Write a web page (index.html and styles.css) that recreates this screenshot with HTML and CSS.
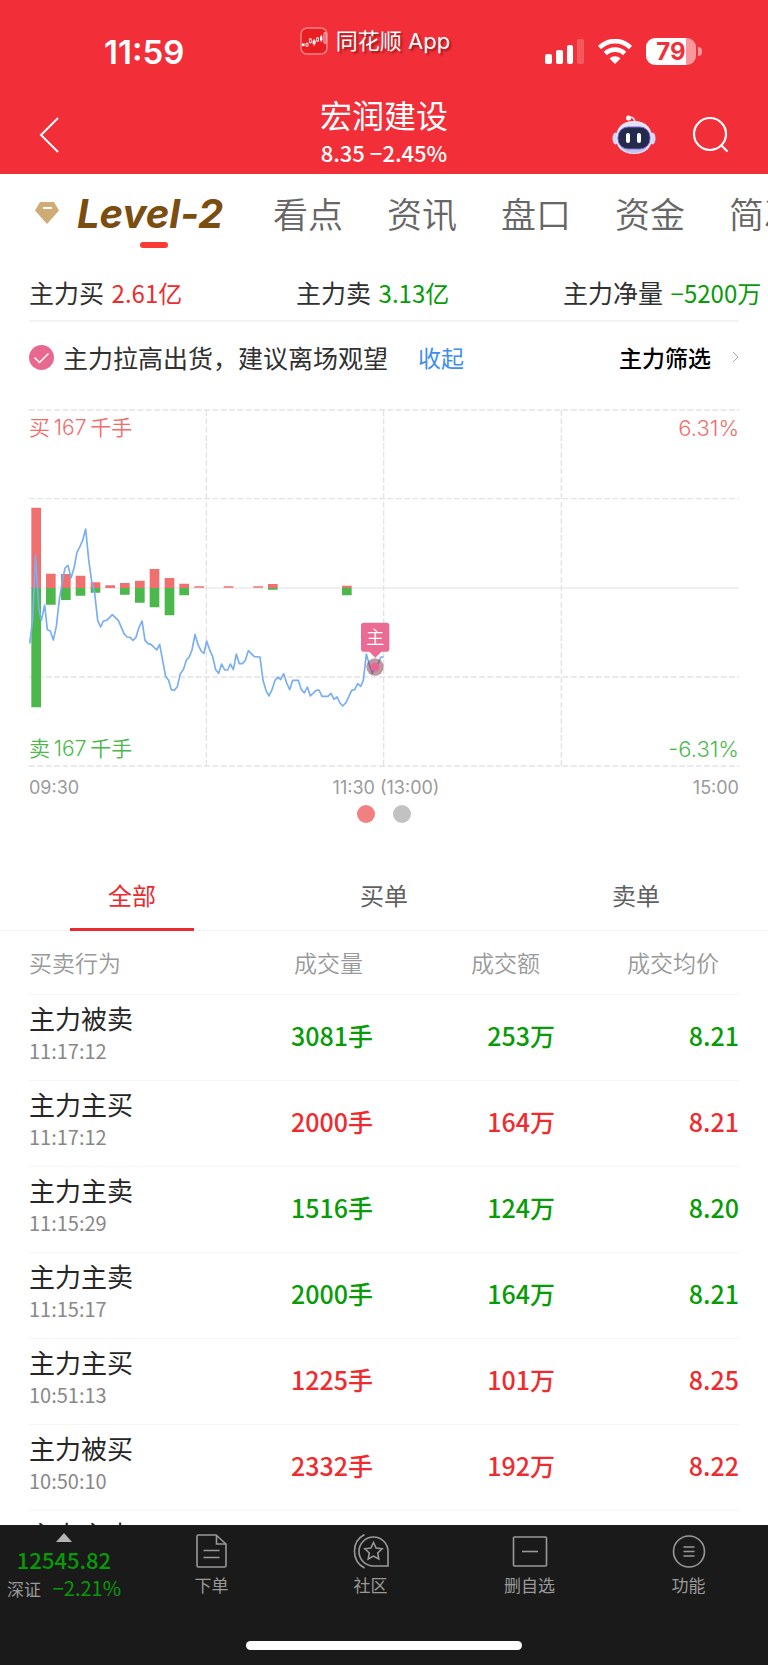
FILE: index.html
```html
<!DOCTYPE html>
<html lang="zh-CN">
<head>
	<meta charset="utf-8">
	<meta name="viewport" content="width=device-width, initial-scale=1">
	<title>宏润建设</title>
	<link rel="stylesheet" href="styles.css">
</head>
<body>
	<header class="header">
		<div class="status">
			<div class="clock">11:59</div>
			<div class="brand">
				<svg width="28" height="28" viewBox="0 0 28 28">
					<rect x="1" y="1" width="26" height="26" rx="6" fill="#e81e22" stroke="#f9858a" stroke-width="1.5"/>
					<g fill="#fff">
						<rect x="2" y="16.500" width="2.600" height="2.600"/>
						<rect x="12.600" y="13.500" width="3" height="3.600"/>
						<rect x="20" y="9.500" width="2.400" height="4"/>
					</g>
					<g fill="none" stroke="#fff" stroke-width=".8">
						<path d="M14.100 12v7M21.200 8v7M7 15.500v1M7 19v1M10.300 11v1M10.300 15.500v1M17.600 10v1M17.600 14v1"/>
						<rect x="6" y="16.500" width="2" height="2.500"/>
						<rect x="9.300" y="12" width="2" height="3.500"/>
						<rect x="16.600" y="11" width="2" height="3"/>
						<rect x="24" y="5.500" width="2" height="11" rx="1"/>
					</g>
				</svg>
				<span>同花顺 App</span>
			</div>
			<div class="signals">
				<svg width="39" height="25" viewBox="0 0 39 25" fill="#fff">
					<rect x="0" y="15" width="7" height="10" rx="2"/>
					<rect x="11" y="11" width="7" height="14" rx="2"/>
					<rect x="22" y="6" width="6" height="19" rx="2"/>
					<rect x="32" y="0" width="7" height="25" rx="2" opacity=".2"/>
				</svg>
				<svg width="34" height="25" viewBox="0 0 34 25" fill="none" stroke="#fff" stroke-width="4.600">
					<path d="M1.500 8.500a22 22 0 0 1 31 0"/>
					<path d="M7.300 14.500a14 14 0 0 1 19.400 0"/>
					<path d="M17 25l-5.500-5.500a8 8 0 0 1 11 0z" fill="#fff" stroke="none"/>
				</svg>
				<div class="battery">79</div>
			</div>
		</div>
		<div class="titlebar">
			<button class="icon-btn" aria-label="返回">
				<svg width="20" height="36" viewBox="0 0 20 36" fill="none" stroke="#fff" stroke-width="2"><path d="M19 1L2 18l17 17"/></svg>
			</button>
			<div class="title">
				<h1>宏润建设</h1>
				<p>8.35 −2.45%</p>
			</div>
			<div class="tools">
				<button class="icon-btn" aria-label="助手">
					<svg width="44" height="40" viewBox="0 0 44 40">
						<path d="M16 2.500c5-1 7 1 7 6" fill="none" stroke="#e9e9fa" stroke-width="1.500"/>
						<circle cx="16.500" cy="3" r="2.500" fill="#fff"/>
						<ellipse cx="3.500" cy="23.500" rx="3" ry="6" fill="#d5d6f3"/>
						<ellipse cx="40.500" cy="23.500" rx="3" ry="6" fill="#d5d6f3"/>
						<path d="M22 6c13 0 18 8 18 17s-6 16-18 16S4 32 4 23 9 6 22 6z" fill="#e4e4f6"/>
						<path d="M8 31c3 5 8 7 14 7s11-2 14-7c-4 3-8 4-14 4s-10-1-14-4z" fill="#c3c5e8"/>
						<rect x="6" y="12" width="32" height="22" rx="10" fill="#242a4c" stroke="#7d62d8"/>
						<rect x="14" y="18" width="4" height="10" rx="2" fill="#fff"/>
						<rect x="25" y="18" width="4" height="10" rx="2" fill="#fff"/>
					</svg>
				</button>
				<button class="icon-btn" aria-label="搜索">
					<svg width="37" height="37" viewBox="0 0 37 37" fill="none" stroke="#fff" stroke-width="2.200"><circle cx="18" cy="18" r="16"/><path d="M29 29l6.500 6.500"/></svg>
				</button>
			</div>
		</div>
	</header>

	<main>
		<nav class="tabs">
			<a href="#" class="level2">
				<svg width="24" height="22" viewBox="0 0 24 22"><path d="M5 0h14l5 8.500L12 22 0 8.500z" fill="#cfac76"/><rect x="8" y="5" width="9" height="2" fill="#fff"/></svg>
				<b>Level-2</b>
			</a>
			<a href="#">看点</a>
			<a href="#">资讯</a>
			<a href="#">盘口</a>
			<a href="#">资金</a>
			<a href="#">简况</a>
		</nav>

		<div class="summary">
			<div>主力买 <span class="up">2.61亿</span></div>
			<div>主力卖 <span class="down">3.13亿</span></div>
			<div>主力净量 <span class="down">−5200万</span></div>
		</div>

		<div class="advice">
			<svg width="25" height="25" viewBox="0 0 25 25" fill="none"><circle cx="12.500" cy="12.500" r="12.500" fill="#e8688f"/><path d="M5.500 12.500l5 5 9-9" stroke="#fff" stroke-width="1.500"/></svg>
			<span>主力拉高出货，建议离场观望</span>
			<button class="collapse">收起</button>
			<button class="filter">主力筛选
				<svg width="7" height="12" viewBox="0 0 7 12" fill="none" stroke="#aaa"><path d="M1 1l5 5-5 5"/></svg>
			</button>
		</div>

		<section class="chart">
			<svg class="plot" viewBox="87 28 2130 1074" fill="none">
				<g stroke="#e3e3e5" stroke-width="4" stroke-dasharray="18 7">
					<path d="M87 31H2217M87 297H2217M87 832H2217M87 1099H2217"/>
					<path d="M619 31V1099M1151 31V1099M1684 31V1099"/>
				</g>
				<path d="M87 565H2217" stroke="#e0e0e0" stroke-width="3"/>
				<path fill="#f07070" d="M94 324h29v241h-29zM138 522h29v43h-29zM183 523h29v42h-29zM227 528h29v37h-29zM272 548h29v17h-29zM316 557h29v8h-29zM360 550h29v15h-29zM405 543h29v22h-29zM449 508h29v57h-29zM494 535h29v30h-29zM538 552h29v13h-29zM583 560h29v4h-29zM671 560h29v4h-29zM760 560h29v4h-29zM804 553h29v12h-29zM1026 558h29v7h-29z"/>
				<path fill="#4bb84b" d="M94 565h29v358h-29zM138 565h29v50h-29zM183 565h29v36h-29zM227 565h29v23h-29zM272 565h29v14h-29zM360 565h29v20h-29zM405 565h29v44h-29zM449 565h29v58h-29zM494 565h29v82h-29zM538 565h29v22h-29zM804 565h29v5h-29zM1026 565h29v22h-29z"/>
				<polyline stroke="#78aef2" stroke-width="5" stroke-linejoin="round" points="89,732 98,660 107,467 116,625 124,662 134,616 142,690 151,694 160,721 169,680 178,600 187,545 195,505 204,497 213,535 222,505 231,458 240,440 248,422 257,388 266,480 275,545 284,580 293,662 302,682 310,664 320,662 337,645 355,662 372,702 381,712 390,713 399,722 408,713 417,683 426,664 435,722 444,732 453,734 470,751 479,734 497,831 506,842 514,870 523,872 532,861 541,822 550,810 559,782 568,771 576,751 585,704 594,735 604,755 612,761 620,724 630,753 638,771 647,810 656,821 665,793 674,811 683,811 691,793 700,810 709,763 718,792 727,792 736,782 745,753 763,771 780,772 789,842 798,872 807,889 816,870 825,842 834,832 842,840 851,822 860,850 869,870 878,842 895,842 904,870 913,880 922,862 931,889 948,872 957,871 966,890 984,890 993,881 1002,899 1011,892 1020,910 1028,919 1038,909 1055,872 1064,870 1073,852 1082,860 1090,842 1099,763 1108,795 1117,821 1126,800 1135,790 1143,772 1151,772"/>
				<circle cx="1125" cy="802" r="26" fill="#7b2f45" fill-opacity=".5"/>
				<circle cx="1125" cy="802" r="13" fill="#ea6690"/>
				<path d="M1091 669h69q8 0 8 8v71q0 8-8 8h-16l-18 18-18-18h-17q-8 0-8-8v-71q0-8 8-8z" fill="#ea6c94"/>
				<text class="flag" x="1126" y="733" text-anchor="middle">主</text>
			</svg>
			<span class="label buy">买&thinsp;167&thinsp;千手</span>
			<span class="label buy right">6.31%</span>
			<span class="label sell">卖&thinsp;167&thinsp;千手</span>
			<span class="label sell right">-6.31%</span>
		</section>
		<div class="axis"><span>09:30</span><span>11:30 (13:00)</span><span>15:00</span></div>
		<div class="dots"><i class="on"></i><i></i></div>

		<nav class="orders">
			<a href="#" class="on">全部</a>
			<a href="#">买单</a>
			<a href="#">卖单</a>
		</nav>

		<div class="trades">
			<table>
				<thead>
					<tr><th>买卖行为</th><th class="volume">成交量</th><th class="amount">成交额</th><th class="price">成交均价</th></tr>
				</thead>
				<tbody>
					<tr class="down"><td>主力被卖<time>11:17:12</time></td><td>3081手</td><td>253万</td><td>8.21</td></tr>
					<tr class="up"><td>主力主买<time>11:17:12</time></td><td>2000手</td><td>164万</td><td>8.21</td></tr>
					<tr class="down"><td>主力主卖<time>11:15:29</time></td><td>1516手</td><td>124万</td><td>8.20</td></tr>
					<tr class="down"><td>主力主卖<time>11:15:17</time></td><td>2000手</td><td>164万</td><td>8.21</td></tr>
					<tr class="up"><td>主力主买<time>10:51:13</time></td><td>1225手</td><td>101万</td><td>8.25</td></tr>
					<tr class="up"><td>主力被买<time>10:50:10</time></td><td>2332手</td><td>192万</td><td>8.22</td></tr>
					<tr class="down"><td>主力主卖</td><td></td><td></td><td></td></tr>
				</tbody>
			</table>
		</div>
	</main>

	<footer class="footer">
		<div class="menu">
			<a href="#" class="index">
				<svg width="16" height="9" viewBox="0 0 16 9"><path d="M8 0l8 9H0z" fill="#b5b5b5"/></svg>
				<strong>12545.82</strong>
				<span>深证 <em>−2.21%</em></span>
			</a>
			<a href="#">
				<svg width="36" height="36" viewBox="0 0 36 36" fill="none" stroke="#999" stroke-width="1.600"><path d="M22 2H4.500Q3 2 3 3.500v29Q3 34 4.500 34h26q1.500 0 1.500-1.500V11z"/><path d="M22.500 2.500V11H32M9.500 17.500h16M9.500 24.500h16"/></svg>
				下单
			</a>
			<a href="#">
				<svg width="36" height="36" viewBox="0 0 36 36" fill="none" stroke="#999" stroke-width="1.600"><path d="M11.500 1.500a19 19 0 0 0 0 33.500M20.500 4a14.500 14.500 0 1 0 0 29H35V18.500A14.500 14.500 0 0 0 20.500 4z"/><path d="M20.500 9.500l2.600 5.500 6 .8-4.400 4.200 1.100 6-5.300-2.900-5.300 2.900 1.100-6-4.400-4.200 6-.8z"/></svg>
				社区
			</a>
			<a href="#">
				<svg width="36" height="36" viewBox="0 0 36 36" fill="none" stroke="#999" stroke-width="1.600"><rect x="1.500" y="4" width="33" height="29" rx="1"/><path d="M10 18.500h16"/></svg>
				删自选
			</a>
			<a href="#">
				<svg width="36" height="36" viewBox="0 0 36 36" fill="none" stroke="#999" stroke-width="1.600"><circle cx="18" cy="18.500" r="15.500"/><path d="M12.500 14h11M12.500 18.500h11M12.500 23h11"/></svg>
				功能
			</a>
		</div>
		<div class="home"></div>
	</footer>
</body>
</html>
```

FILE: styles.css
```css
* {
	box-sizing: border-box;
}
body {
	margin: 0;
	height: 100vh;
	display: flex;
	flex-direction: column;
	overflow: hidden;
	background: #fff;
	color: #303030;
	font-family: "Noto Sans CJK SC", sans-serif;
	font-weight: 400;
}
a {
	color: inherit;
	text-decoration: none;
}
button {
	border: 0;
	padding: 0;
	background: none;
	color: inherit;
	font: inherit;
	cursor: pointer;
}
svg {
	display: block;
	flex: none;
}
.up {
	color: #ee2c30;
}
.down {
	color: #079c07;
}

/* header */
.header {
	flex: none;
	background: #f22f38;
	color: #fff;
}
.status {
	display: grid;
	grid-template-columns: 1fr auto 1fr;
	height: 98px;
	padding: 0 66px 0 48px;
}
.clock {
	padding: 32px 0 0 56px;
	font: 600 33px/40px Inter, sans-serif;
}
.brand {
	display: flex;
	align-items: center;
	gap: 8px;
	height: 81px;
	font: 400 22px/32px Inter, "Noto Sans CJK SC", sans-serif;
	text-shadow: 2px 2px 2px rgba(80, 0, 0, .5);
}
.signals {
	display: flex;
	justify-content: flex-end;
	align-items: center;
	gap: 14px;
	height: 103px;
}
.battery {
	position: relative;
	width: 50px;
	height: 27px;
	margin-right: 6px;
	border-radius: 9px;
	background: linear-gradient(to right, #fff 40px, #f8989c 40px);
	color: #f22f38;
	font: 700 24px/27px Inter, sans-serif;
	text-align: center;
}
.battery::after {
	content: "";
	position: absolute;
	right: -6px;
	top: 9px;
	width: 4px;
	height: 9px;
	border-radius: 0 4px 4px 0;
	background: #f8989c;
}
.titlebar {
	display: grid;
	grid-template-columns: 1fr auto 1fr;
	height: 76px;
	padding: 0 39px;
}
.titlebar .icon-btn {
	height: 73px;
}
.title {
	text-align: center;
}
.title h1 {
	margin: 0;
	font-size: 32px;
	font-weight: 400;
	line-height: 32px;
}
.title p {
	margin: 0;
	font-size: 22px;
	font-weight: 500;
	line-height: 44px;
}
.tools {
	display: flex;
	justify-content: flex-end;
	gap: 36px;
}
.titlebar > .icon-btn {
	justify-self: start;
}

/* content */
main {
	flex: 1;
	min-height: 0;
	overflow: hidden;
}
.tabs {
	display: flex;
	gap: 44px;
	height: 92px;
	padding-left: 35px;
	overflow: hidden;
	color: #666;
	font-size: 35px;
	font-weight: 350;
	line-height: 78px;
	white-space: nowrap;
}
.level2 {
	position: relative;
	flex: none;
	display: flex;
	gap: 18px;
	width: 194px;
	color: #7a4d10;
	font-family: Inter, sans-serif;
	font-size: 40px;
	font-style: italic;
}
.level2 b {
	font-weight: 700;
	line-height: 80px;
}
.level2 svg {
	margin-top: 28px;
}
.level2::after {
	content: "";
	position: absolute;
	left: 105px;
	top: 68px;
	width: 28px;
	height: 6px;
	border-radius: 3px;
	background: #fa3a34;
}
.summary {
	display: grid;
	grid-template-columns: repeat(3, 267px);
	height: 56px;
	margin: 0 29px;
	border-bottom: 2px solid #f3f3f3;
	font-size: 25px;
	line-height: 52px;
	white-space: nowrap;
}
.summary span {
	margin-left: 2px;
	font-size: 24px;
}
.advice {
	display: flex;
	align-items: center;
	height: 72px;
	padding: 0 29px 2px;
	font-size: 25px;
}
.advice span {
	margin: 0 30px 0 9px;
}
.collapse {
	color: #3e8ef2;
	font-size: 23px;
}
.filter {
	display: flex;
	align-items: center;
	gap: 21px;
	margin-left: auto;
	color: #000;
	font-size: 23px;
	font-weight: 500;
}

/* chart */
.chart {
	position: relative;
	margin: 15px 29px 0;
}
.plot {
	width: 100%;
}
.flag {
	fill: #fff;
	font-size: 54px;
	font-weight: 350;
}
.label {
	position: absolute;
	left: 0;
	font: 350 21px/32px Inter, "Noto Sans CJK SC", sans-serif;
}
.label.right {
	left: auto;
	right: 0;
	font-size: 22px;
}
.label.buy {
	top: 3px;
	color: #f26c6c;
}
.label.sell {
	bottom: 2px;
	color: #4bb84b;
}
.axis {
	display: flex;
	justify-content: space-between;
	height: 38px;
	padding: 0 29px;
	color: #9a9a9a;
	font: 400 18px/42px Inter, sans-serif;
}
.dots {
	display: flex;
	justify-content: center;
	gap: 18px;
	height: 59px;
}
.dots i {
	width: 18px;
	height: 18px;
	border-radius: 50%;
	background: #c2c2c2;
}
.dots .on {
	background: #f28080;
}

/* order tabs */
.orders {
	display: grid;
	grid-template-columns: repeat(3, 1fr);
	justify-items: center;
	height: 67px;
	padding: 0 6px;
	border-bottom: 1px solid #f2f2f2;
	color: #606060;
	font-size: 24px;
	line-height: 62px;
	text-align: center;
}
.orders a {
	width: 124px;
	height: 67px;
}
.orders .on {
	border-bottom: 3px solid #ea2a2e;
	color: #ea2a2e;
}

/* trades */
.trades {
	padding: 0 29px;
}
table {
	width: 100%;
	border-collapse: collapse;
	table-layout: fixed;
}
th,
td {
	padding: 0;
	border-bottom: 1px solid #f5f5f5;
	text-align: right;
}
th {
	height: 63px;
	color: #999;
	font-size: 23px;
	font-weight: 350;
}
td {
	height: 86px;
	padding-bottom: 5px;
	font-size: 25px;
	font-weight: 500;
}
th:first-child,
td:first-child {
	text-align: left;
}
td:first-child {
	padding: 6px 0 0;
	color: #262626;
	font-size: 26px;
	font-weight: 400;
	line-height: 34px;
	vertical-align: top;
}
.volume {
	width: 184px;
	padding-right: 10px;
}
.amount {
	width: 182px;
	padding-right: 15px;
}
.price {
	width: 184px;
	padding-right: 20px;
}
time {
	display: block;
	color: #888;
	font-size: 20px;
	line-height: 32px;
}

/* bottom menu */
.footer {
	flex: none;
	display: flex;
	flex-direction: column;
	align-items: center;
	justify-content: space-between;
	height: 140px;
	padding-bottom: 15px;
	background: #1a1a1a;
	color: #999;
}
.menu {
	display: grid;
	grid-template-columns: 132px repeat(4, 1fr);
	width: 100%;
}
.menu a {
	display: flex;
	flex-direction: column;
	align-items: center;
	padding-top: 8px;
	font-size: 17px;
	line-height: 32px;
}
.menu .index {
	padding-right: 4px;
}
.index strong {
	color: #079c07;
	font-size: 22px;
	font-weight: 500;
	line-height: 34px;
}
.index span {
	line-height: 24px;
}
.index em {
	margin-left: 8px;
	color: #079c07;
	font-size: 20px;
	font-style: normal;
}
.home {
	width: 36%;
	height: 9px;
	border-radius: 5px;
	background: #fff;
}
```
